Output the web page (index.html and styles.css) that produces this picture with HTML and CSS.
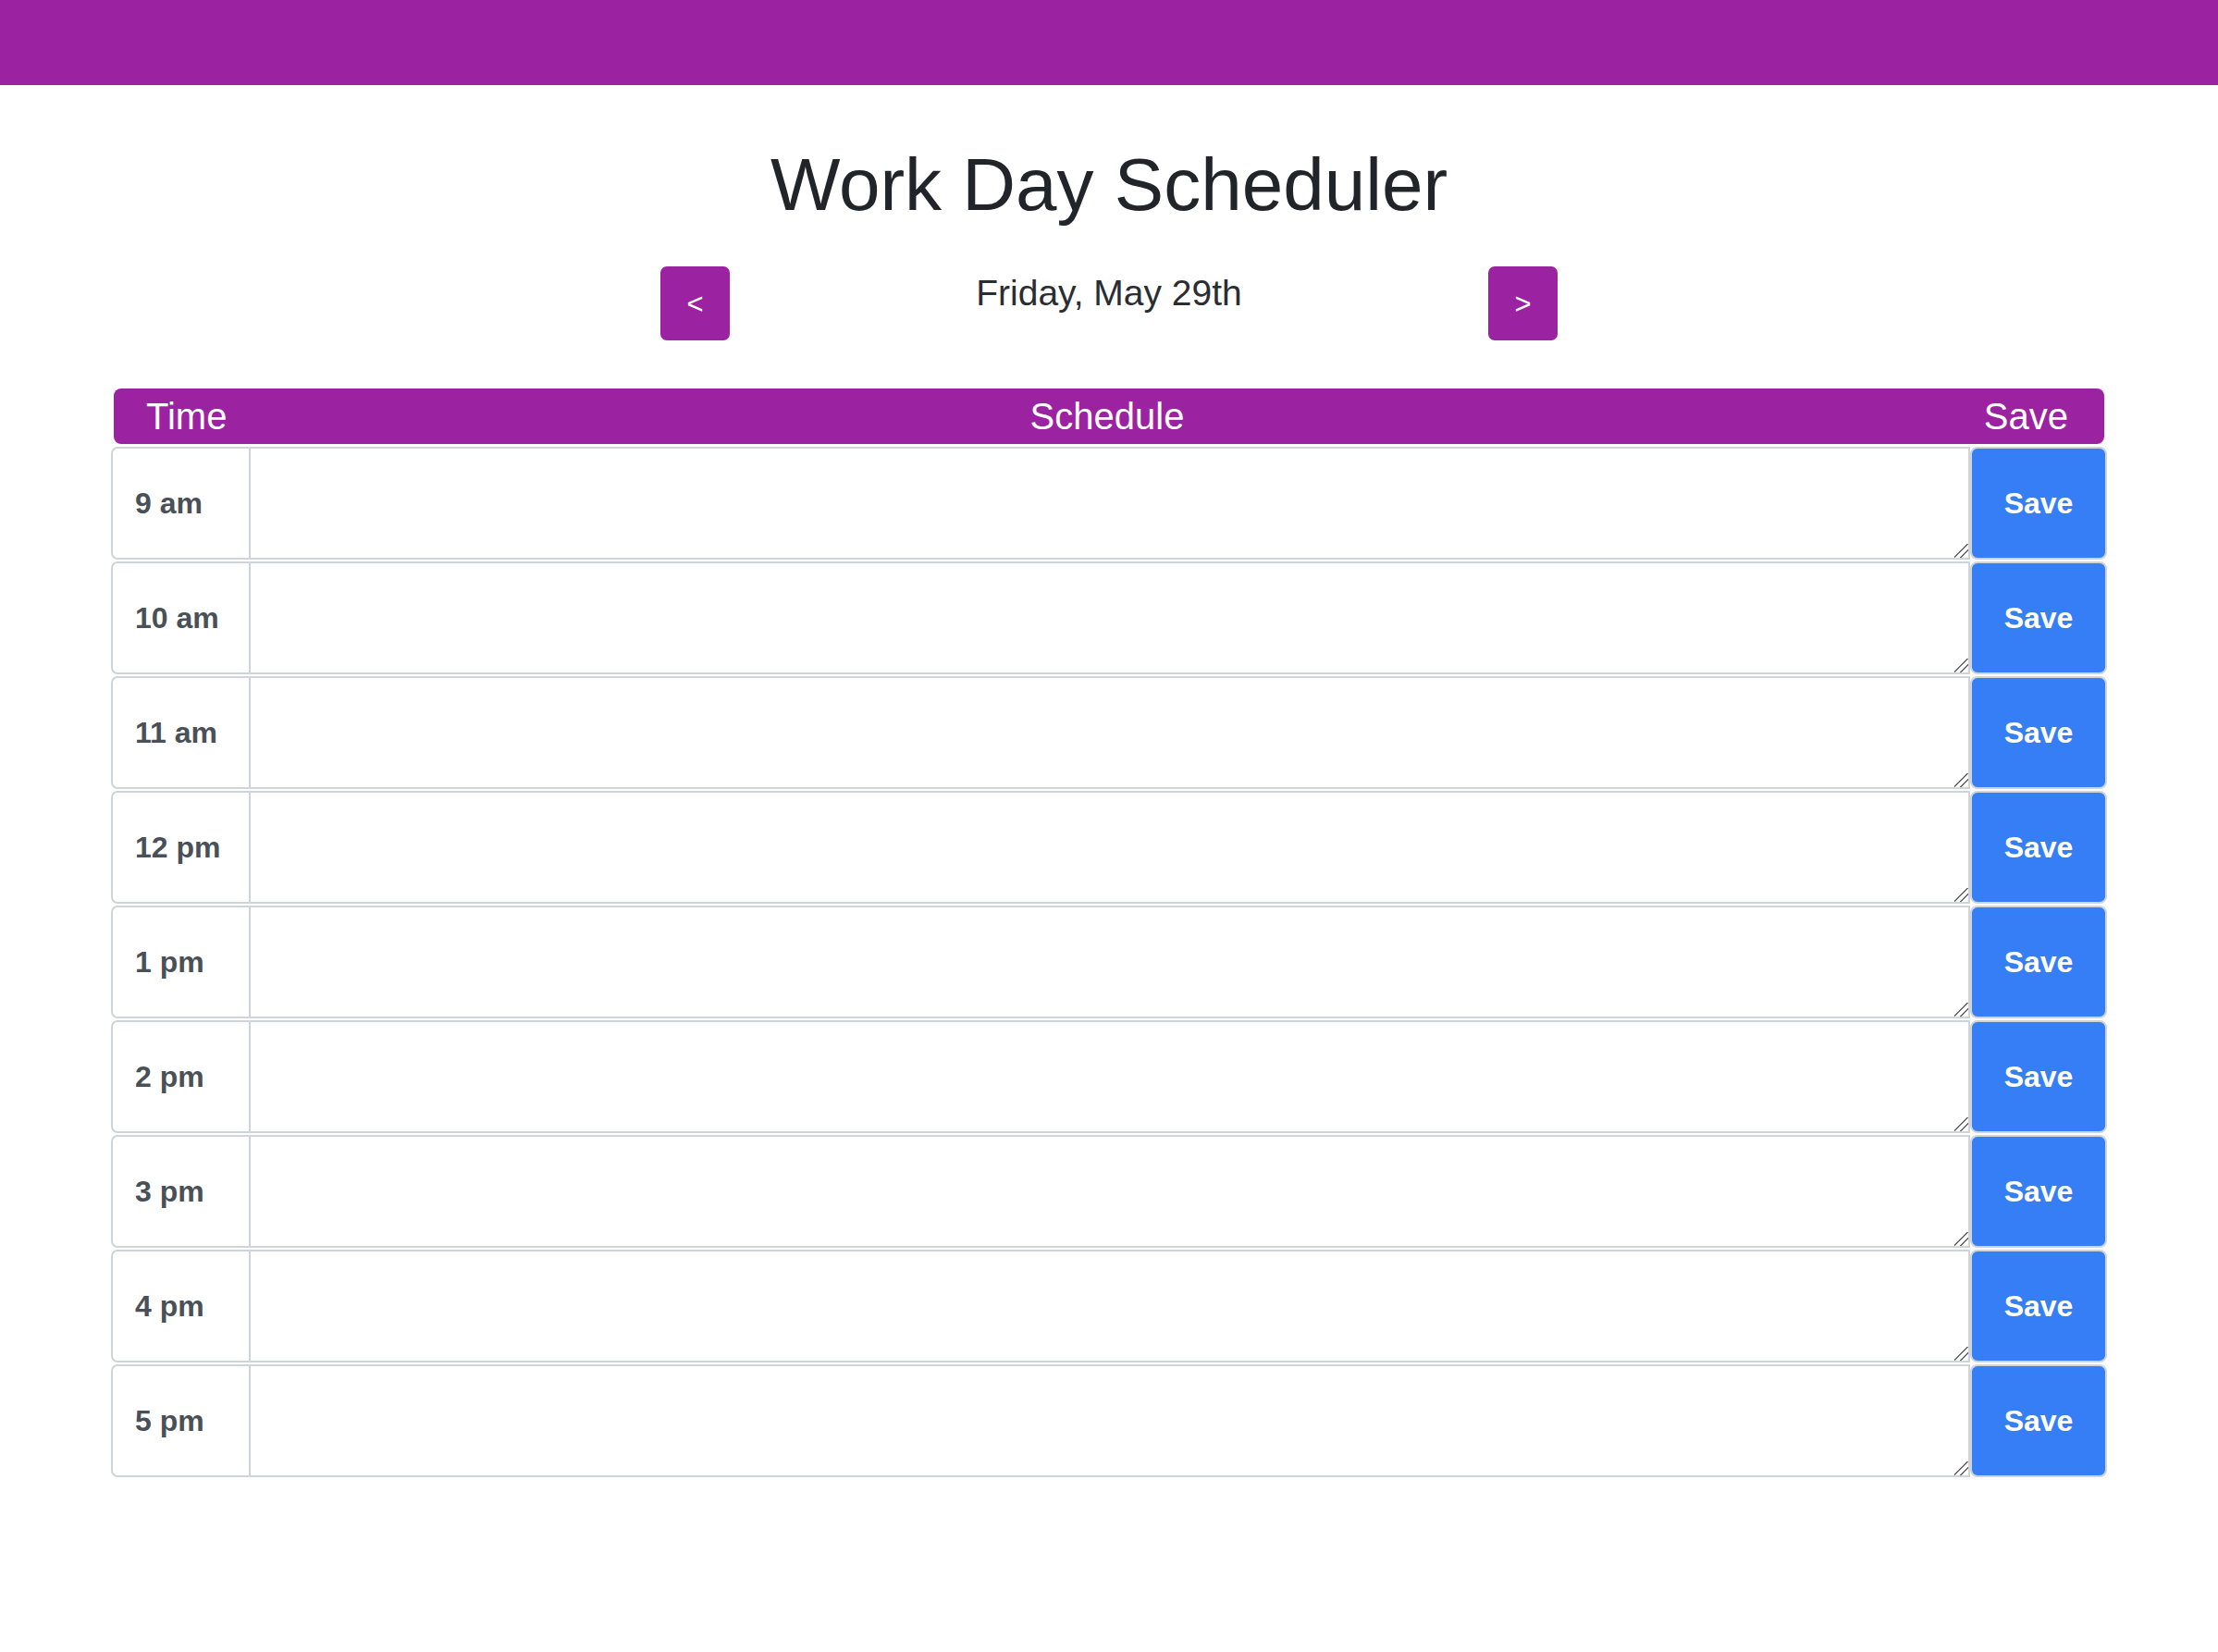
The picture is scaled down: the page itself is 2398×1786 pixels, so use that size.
FILE: index.html
```html
<!DOCTYPE html>
<html lang="en">
<head>
<meta charset="utf-8">
<title>Work Day Scheduler</title>
<link rel="stylesheet" href="styles.css">
</head>
<body>
<div class="topbar"></div>
<header class="jumbo">
  <h1 class="title">Work Day Scheduler</h1>
  <div class="daynav">
    <button class="navbtn">&lt;</button>
    <p class="date">Friday, May 29th</p>
    <button class="navbtn">&gt;</button>
  </div>
</header>
<main class="planner">
  <div class="head">
    <span class="h-time">Time</span>
    <span class="h-sched">Schedule</span>
    <span class="h-save">Save</span>
  </div>
  <div class="row"><div class="hour">9 am</div><textarea class="task"></textarea><button class="save">Save</button></div>
  <div class="row"><div class="hour">10 am</div><textarea class="task"></textarea><button class="save">Save</button></div>
  <div class="row"><div class="hour">11 am</div><textarea class="task"></textarea><button class="save">Save</button></div>
  <div class="row"><div class="hour">12 pm</div><textarea class="task"></textarea><button class="save">Save</button></div>
  <div class="row"><div class="hour">1 pm</div><textarea class="task"></textarea><button class="save">Save</button></div>
  <div class="row"><div class="hour">2 pm</div><textarea class="task"></textarea><button class="save">Save</button></div>
  <div class="row"><div class="hour">3 pm</div><textarea class="task"></textarea><button class="save">Save</button></div>
  <div class="row"><div class="hour">4 pm</div><textarea class="task"></textarea><button class="save">Save</button></div>
  <div class="row"><div class="hour">5 pm</div><textarea class="task"></textarea><button class="save">Save</button></div>
</main>
</body>
</html>
```
FILE: styles.css
```css
html, body {
  margin: 0;
  padding: 0;
  background: #ffffff;
  font-family: "Liberation Sans", Arial, Helvetica, sans-serif;
  color: #212529;
}

.topbar {
  height: 92px;
  background: #9b22a0;
}

.jumbo {
  text-align: center;
}

.title {
  margin: 60px 0 0 0;
  font-size: 80px;
  font-weight: 400;
  line-height: 96px;
  color: #212529;
}

.daynav {
  display: flex;
  justify-content: center;
  align-items: flex-start;
  margin-top: 40px;
}

.navbtn {
  width: 75px;
  height: 80px;
  border: none;
  border-radius: 7px;
  background: #9b22a0;
  color: #ffffff;
  font-family: "Liberation Sans", Arial, sans-serif;
  font-size: 31px;
  padding: 0;
  line-height: 1;
}

.date {
  width: 820px;
  margin: 0;
  font-size: 39px;
  font-weight: 300;
  line-height: 58px;
  color: #2a2e33;
}

.planner {
  width: 2158px;
  margin: 52px auto 0 auto;
}

.head {
  display: grid;
  grid-template-columns: 1fr auto 1fr;
  align-items: center;
  height: 60px;
  margin: 0 3px 3px 3px;
  padding: 0 39px 0 35px;
  background: #9b22a0;
  color: #ffffff;
  border-radius: 8px;
  font-size: 40px;
  line-height: 60px;
}

.h-time { justify-self: start; }
.h-sched { justify-self: center; }
.h-save { justify-self: end; }

.row {
  display: flex;
  height: 122px;
  margin-bottom: 2px;
}

.hour {
  box-sizing: border-box;
  width: 149px;
  flex: none;
  display: flex;
  align-items: center;
  padding-left: 24px;
  border: 2px solid #ced4da;
  border-right: none;
  border-radius: 7px 0 0 7px;
  background: #ffffff;
  color: #495057;
  font-size: 32px;
  font-weight: 700;
}

.task {
  box-sizing: border-box;
  flex: 1;
  height: 122px;
  margin: 0;
  border: 2px solid #ced4da;
  border-radius: 0;
  background: #ffffff;
  resize: vertical;
  font-family: "Liberation Sans", Arial, sans-serif;
  font-size: 24px;
  outline: none;
}

.task::-webkit-resizer {
  background: linear-gradient(135deg,
    transparent 0%, transparent 44%,
    #6b6b6b 44%, #6b6b6b 52%,
    transparent 52%, transparent 68%,
    #6b6b6b 68%, #6b6b6b 76%,
    transparent 76%);
}

.save {
  box-sizing: border-box;
  width: 148px;
  flex: none;
  height: 122px;
  margin: 0;
  border: 2px solid #ced4da;
  border-radius: 8px;
  background: #357ef5;
  color: #ffffff;
  font-family: "Liberation Sans", Arial, sans-serif;
  font-size: 32px;
  font-weight: 700;
  padding: 0;
}
```
